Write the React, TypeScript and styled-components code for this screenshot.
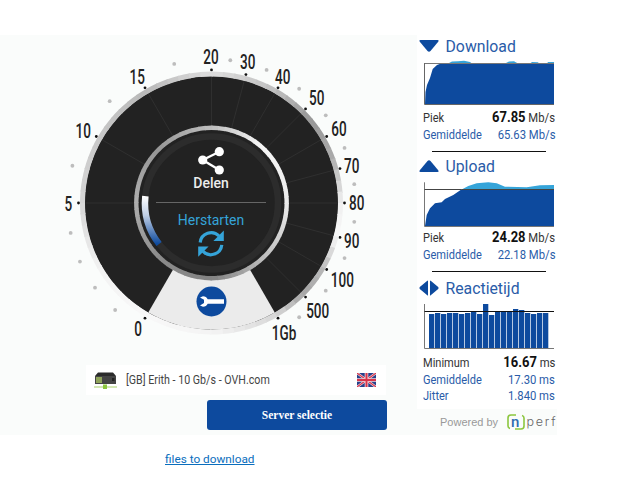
import React from "react";
import styled, { createGlobalStyle } from "styled-components";

const GlobalStyle = createGlobalStyle`
  html, body {
    margin: 0;
    padding: 0;
    background: #fff;
    font-family: Roboto, "Liberation Sans", sans-serif;
  }
`;

const BLUE = "#0d4a9e";
const SKY = "#35a4d9";
const CX = 211.5;
const CY = 203;

const Page = styled.div`
  width: 621px;
  height: 486px;
  padding-top: 35px;
  box-sizing: border-box;
`;

const Panel = styled.div`
  display: flex;
  width: 557px;
  height: 400px;
  background: #fafcfb;
`;

const LeftColumn = styled.div`
  width: 417px;
  display: flex;
  flex-direction: column;
`;

const GaugeSvg = styled.svg`
  display: block;
  width: 417px;
  height: 330px;
  flex: none;
`;

const ServerRow = styled.div`
  display: flex;
  align-items: center;
  width: 300px;
  height: 30px;
  margin-left: 86px;
  padding: 0 10px 0 8px;
  box-sizing: border-box;
  background: #fff;
  color: #444;
  font-size: 12px;
`;

const ServerName = styled.span`
  flex: 1;
  margin-left: 9px;
  transform: scaleX(0.89);
  transform-origin: left center;
  white-space: nowrap;
`;

const ServerButton = styled.button`
  display: block;
  width: 180px;
  height: 30px;
  margin: 5px 0 0 207px;
  border: 0;
  border-radius: 3px;
  background: ${BLUE};
  color: #fff;
  font-family: "Liberation Serif", serif;
  font-size: 11.5px;
  font-weight: 700;
`;

const RightColumn = styled.div`
  width: 140px;
  display: flex;
  flex-direction: column;
`;

const StatsCard = styled.div`
  background: #fff;
  height: 374px;
  padding: 1px 2px 0 2px;
  box-sizing: border-box;
`;

const Section = styled.section<{ $height: number }>`
  height: ${(p) => p.$height}px;
`;

const TitleRow = styled.div`
  display: flex;
  align-items: center;
  gap: 6.5px;
  height: 20px;
  color: #2a5ca8;
  font-size: 15.8px;
`;

const ChartSvg = styled.svg`
  display: block;
  width: 134px;
  margin: 4px 0 2px 1px;
  flex: none;
`;

const Stat = styled.div<{ $accent?: boolean }>`
  display: flex;
  justify-content: space-between;
  align-items: baseline;
  height: ${(p) => (p.$accent ? 16 : 18)}px;
  margin-top: ${(p) => (p.$accent ? 0.6 : 0)}px;
  padding-left: 4px;
  color: ${(p) => (p.$accent ? "#2a5ca8" : "#333")};
  font-size: 12px;
`;

const StatLabel = styled.span`
  display: inline-block;
  transform: scaleX(0.92);
  transform-origin: left center;
`;

const StatValue = styled.span`
  display: inline-block;
  transform: scaleX(0.94);
  transform-origin: right center;
  white-space: nowrap;
`;

const Strong = styled.b`
  color: #111;
  font-size: 13.8px;
  font-weight: 700;
  margin-right: 0;
`;

const Divider = styled.div`
  width: 114px;
  height: 1px;
  margin: 7px 0 0 13px;
  background: #111;
`;

const PoweredRow = styled.div`
  display: flex;
  align-items: center;
  height: 26px;
  padding-left: 23px;
  color: #999;
  font-family: "Liberation Sans", sans-serif;
  font-size: 11px;
  white-space: nowrap;
  overflow: hidden;
`;

const LogoSvg = styled.svg`
  flex: none;
  margin-left: 9px;
`;

const DownloadLink = styled.a`
  display: block;
  margin: 17px 0 0 165px;
  color: #0a6ebd;
  font-size: 11.8px;
  line-height: 14px;
  text-decoration: underline;
`;

const TickLabel = styled.text`
  font-family: Roboto, sans-serif;
  font-size: 20.5px;
  font-weight: 500;
  fill: #222;
  text-anchor: middle;
  dominant-baseline: central;
`;

const GaugeCaption = styled.text<{ $color: string; $weight: number }>`
  font-family: Roboto, sans-serif;
  font-size: 14px;
  font-weight: ${(p) => p.$weight};
  fill: ${(p) => p.$color};
  text-anchor: middle;
`;

const polar = (deg: number, r: number) => {
  const a = (deg * Math.PI) / 180;
  return [CX + r * Math.sin(a), CY - r * Math.cos(a)];
};

const labels: [string, number, number][] = [
  ["20", 211, 57.3],
  ["30", 247.7, 62.3],
  ["40", 282.7, 76.7],
  ["50", 316.7, 97.7],
  ["60", 339, 129],
  ["70", 351.7, 165.7],
  ["80", 356.7, 203.3],
  ["90", 351.7, 241],
  ["100", 342.3, 280],
  ["500", 317.7, 311],
  ["1Gb", 284, 333.3],
  ["0", 138, 328.7],
  ["5", 68.3, 204],
  ["10", 83.3, 130.7],
  ["15", 137.3, 76.7],
];

const majorAngles = [-150, -90, -60, -30, 0, 15, 30, 45, 60, 75, 90, 105, 120, 135, 150];
const gridAngles = [-90, -60, -30, 0, 15, 30, 45, 60, 75, 90, 105, 120, 135];
const dotAngles = [
  -138, -126, -114, -102, -75, -45, -15, 7.5, 22.5, 37.5, 52.5, 67.5, 82.5, 97.5, 112.5, 127.5, 142.5,
];

// grey level of the metal rim by angle, clockwise from the top
const rimStops: [number, number][] = [
  [0, 222],
  [30, 190],
  [50, 150],
  [70, 172],
  [90, 240],
  [105, 248],
  [120, 185],
  [135, 165],
  [150, 215],
  [180, 244],
  [210, 248],
  [240, 242],
  [270, 215],
  [300, 200],
  [330, 185],
  [360, 222],
];

const hubStops: [number, number][] = [
  [0, 190],
  [40, 245],
  [90, 235],
  [135, 190],
  [180, 130],
  [225, 140],
  [270, 175],
  [315, 150],
  [360, 190],
];

const greyAt = (stops: [number, number][], deg: number) => {
  for (let i = 1; i < stops.length; i++) {
    if (deg <= stops[i][0]) {
      const [a, ga] = stops[i - 1];
      const [b, gb] = stops[i];
      const g = Math.round(ga + ((gb - ga) * (deg - a)) / (b - a));
      return `rgb(${g},${g},${g})`;
    }
  }
  return "#ccc";
};

function MetalRing({ r, width, stops }: { r: number; width: number; stops: [number, number][] }) {
  const parts = [];
  for (let d = 0; d < 360; d += 5) {
    const [x1, y1] = polar(d, r);
    const [x2, y2] = polar(d + 5.6, r);
    parts.push(
      <path
        key={d}
        d={`M${x1} ${y1} A${r} ${r} 0 0 1 ${x2} ${y2}`}
        fill="none"
        stroke={greyAt(stops, d + 2.5)}
        strokeWidth={width}
      />,
    );
  }
  return <g>{parts}</g>;
}

function RefreshIcon() {
  const half = (
    <>
      <path d="M200.2 242.5A11 11 0 0 1 219 236" fill="none" stroke={SKY} strokeWidth={3.2} />
      <path d="M223.8 230.6V241H213.4Z" fill={SKY} />
    </>
  );
  return (
    <g>
      {half}
      <g transform="rotate(180 211 243.7)">{half}</g>
    </g>
  );
}

function Gauge() {
  const [ax, ay] = polar(-150, 126.5);
  const [bx, by] = polar(150, 126.5);
  const [p1x, p1y] = polar(-84, 66.5);
  const [p2x, p2y] = polar(-128, 66.5);
  return (
    <GaugeSvg viewBox="0 35 417 330">
      <defs>
        <linearGradient id="progress" x1="0" y1="0" x2="0" y2="1">
          <stop offset="0" stopColor="#ffffff" />
          <stop offset="0.4" stopColor="#c0cfe6" />
          <stop offset="1" stopColor={BLUE} />
        </linearGradient>
      </defs>

      {dotAngles.map((d) => {
        const [x, y] = polar(d, 144);
        return <circle key={d} cx={x} cy={y} r={1.9} fill="#bdbdbd" />;
      })}
      {majorAngles.map((d) => {
        const [x, y] = polar(d, 133);
        return <circle key={d} cx={x} cy={y} r={1.4} fill="#111" />;
      })}
      {labels.map(([text, x, y]) => (
        <TickLabel key={text} transform={`translate(${x} ${y}) scale(0.66 1)`}>
          {text}
        </TickLabel>
      ))}

      <circle cx={CX} cy={CY} r={127} fill="#222" />
      <path d={`M${CX} ${CY} L${ax} ${ay} A126.5 126.5 0 0 0 ${bx} ${by} Z`} fill="#ebebeb" />
      <MetalRing r={129} width={5} stops={rimStops} />
      {gridAngles.map((d) => {
        const [x1, y1] = polar(d, 78);
        const [x2, y2] = polar(d, 126);
        return <line key={d} x1={x1} y1={y1} x2={x2} y2={y2} stroke="#353535" strokeWidth={0.7} />;
      })}

      <circle cx={CX} cy={CY} r={74} fill="#222" />
      <MetalRing r={75.2} width={4.4} stops={hubStops} />
      <circle cx={CX} cy={CY} r={66.5} fill="none" stroke="#2c2c2c" strokeWidth={6.5} />
      <path
        d={`M${p1x} ${p1y} A66.5 66.5 0 0 0 ${p2x} ${p2y}`}
        fill="none"
        stroke="url(#progress)"
        strokeWidth={6.5}
      />
      <line x1={156} y1={202.5} x2={266} y2={202.5} stroke="#666" strokeWidth={1} />

      <g fill="#fff" stroke="#fff">
        <line x1={202.7} y1={160} x2={219.3} y2={151.7} strokeWidth={2.4} />
        <line x1={202.7} y1={160} x2={219.3} y2={170} strokeWidth={2.4} />
        <circle cx={202.7} cy={160} r={4.6} strokeWidth={0} />
        <circle cx={219.3} cy={151.7} r={4.6} strokeWidth={0} />
        <circle cx={219.3} cy={170} r={4.6} strokeWidth={0} />
      </g>
      <GaugeCaption x={211} y={188} $color="#ededed" $weight={500}>
        Delen
      </GaugeCaption>
      <GaugeCaption x={211} y={225} $color={SKY} $weight={400}>
        Herstarten
      </GaugeCaption>
      <RefreshIcon />

      <circle cx={211.5} cy={301.5} r={15} fill={BLUE} />
      <path
        d="M203 296.3a5.2 5.2 0 0 1 4.7 3H224V303.7H207.7a5.2 5.2 0 0 1-4.7 3L200 305.6l4-2.6v-3.2l-4-2.4z"
        fill="#fff"
      />
    </GaugeSvg>
  );
}

function DownloadChart() {
  return (
    <ChartSvg height={47} viewBox="0 0 134 47">
      <path
        d="M28 3.5 L32 1.5 L38 1.2 L44 0.8 L50 2 L52 3.5 Z M85 3.5 L89 1.5 L94 1.2 L98 3.5 Z M110 3.5 L112 2 L118 2.2 L119 3.5 Z M127 3.5 L128 2 H134 V3.5 Z"
        fill={SKY}
      />
      <path d="M5 44.5 L5.5 32 L7 25 L10 18 L12.7 9 L17 5 L21 3.5 H134 V44.5 Z" fill={BLUE} />
      <path d="M4.5 3.5 H134" stroke="#777" strokeWidth={1} />
      <path d="M4.5 3 V44.5 H134" fill="none" stroke="#666" strokeWidth={1} />
    </ChartSvg>
  );
}

function UploadChart() {
  return (
    <ChartSvg height={47} viewBox="0 0 134 47">
      <path
        d="M41.7 9.5 L48.3 6 L56.7 3.3 L68.3 2.3 L76.7 3.3 L85 6.7 L106.7 7.3 L120 5.3 L134 5 V9.5 Z"
        fill={SKY}
      />
      <path
        d="M5 46 L6.7 35 L10 28.3 L15 23.3 L21.7 22.3 L25 19 L33.3 15 L41.7 9.3 H134 V46 Z"
        fill={BLUE}
      />
      <path d="M4.5 2.3 V46.5 H134" fill="none" stroke="#777" strokeWidth={1} />
      <path d="M41.7 9.5 H134 M4.5 9.5 H41.7" stroke="#444" strokeWidth={1} />
    </ChartSvg>
  );
}

const latency = [117, 114, 117, 114, 114, 117, 114, 110, 117, 87, 120, 110, 110, 110, 102, 105, 114, 117, 114, 114];

function LatencyChart() {
  return (
    <ChartSvg height={50} viewBox="0 0 134 50">
      {latency.map((top, i) => {
        const y = top / 3 - 27;
        return <rect key={i} x={9 + i * 6} y={y} width={5.3} height={46 - y} fill={BLUE} />;
      })}
      <path d="M4.5 2 V46.5 H134" fill="none" stroke="#777" strokeWidth={1} />
      <path d="M4.5 9.5 H134" stroke="#111" strokeWidth={1} />
    </ChartSvg>
  );
}

function ArrowDown() {
  return (
    <svg width={20} height={12} viewBox="0 0 20 12">
      <path d="M1.5 0 H18.5 Q20.5 0 19 2 L11.5 11 Q10 12.5 8.5 11 L1 2 Q-.5 0 1.5 0 Z" fill={BLUE} />
    </svg>
  );
}

function ArrowUp() {
  return (
    <svg width={20} height={12} viewBox="0 0 20 12">
      <path d="M1.5 12 H18.5 Q20.5 12 19 10 L11.5 1 Q10 -.5 8.5 1 L1 10 Q-.5 12 1.5 12 Z" fill={BLUE} />
    </svg>
  );
}

function ArrowsBoth() {
  return (
    <svg width={20} height={16} viewBox="0 0 20 16">
      <path d="M9 1 V15 Q9 16 8 15 L.8 9 Q0 8 .8 7 L8 1 Q9 0 9 1 Z" fill={BLUE} />
      <path d="M11 1 V15 Q11 16 12 15 L19.2 9 Q20 8 19.2 7 L12 1 Q11 0 11 1 Z" fill={BLUE} />
    </svg>
  );
}

function ServerIcon() {
  return (
    <svg width={23} height={17} viewBox="0 0 23 17">
      <path d="M4 0.5 H19 L22 4 H1 Z" fill="#2b2b2b" />
      <rect x={1} y={4} width={21} height={8} fill="#444" />
      <rect x={2} y={5} width={6} height={6} fill="#8fa35a" />
      <rect x={18} y={6} width={2.5} height={3} fill="#222" />
      <rect x={0} y={14.5} width={23} height={1} fill="#a7cf6b" />
      <rect x={9} y={12.5} width={4} height={4.5} fill="#8cc63f" />
    </svg>
  );
}

function UkFlag() {
  return (
    <svg width={19} height={14} viewBox="0 0 19 14">
      <rect width={19} height={14} fill="#27408b" />
      <path d="M0 0 L19 14 M19 0 L0 14" stroke="#f2d6da" strokeWidth={2.4} />
      <path d="M0 0 L19 14 M19 0 L0 14" stroke="#d8344a" strokeWidth={1.1} />
      <path d="M9.5 0 V14 M0 7 H19" stroke="#f2d6da" strokeWidth={3.6} />
      <path d="M9.5 0 V14 M0 7 H19" stroke="#d8344a" strokeWidth={2} />
    </svg>
  );
}

function NperfLogo() {
  return (
    <LogoSvg width={51} height={16} viewBox="0 0 51 16">
      <path d="M9 1 H4 Q1 1 1 4 V12 Q1 14 3 14.5" fill="none" stroke="#8cc63f" strokeWidth={1.6} />
      <path d="M8 15 H14 Q17 15 17 12 V4 Q17 2 15 1.5" fill="none" stroke="#8cc63f" strokeWidth={1.6} />
      <text x={4} y={12.5} fontFamily="Roboto, sans-serif" fontSize={15} fontWeight={500} fill="#2f6db0">
        n
      </text>
      <text x={19.5} y={11.5} fontFamily="Inter, sans-serif" fontSize={12.5} fontWeight={300} letterSpacing={1.8} fill="#666">
        perf
      </text>
    </LogoSvg>
  );
}

export default function App() {
  return (
    <Page>
      <GlobalStyle />
      <Panel>
        <LeftColumn>
          <Gauge />
          <ServerRow>
            <ServerIcon />
            <ServerName>[GB] Erith - 10 Gb/s - OVH.com</ServerName>
            <UkFlag />
          </ServerRow>
          <ServerButton>Server selectie</ServerButton>
        </LeftColumn>
        <RightColumn>
          <StatsCard>
            <Section $height={120}>
              <TitleRow>
                <ArrowDown />
                Download
              </TitleRow>
              <DownloadChart />
              <Stat>
                <StatLabel>Piek</StatLabel>
                <StatValue>
                  <Strong>67.85</Strong> Mb/s
                </StatValue>
              </Stat>
              <Stat $accent>
                <StatLabel>Gemiddelde</StatLabel>
                <StatValue>65.63 Mb/s</StatValue>
              </Stat>
              <Divider />
            </Section>
            <Section $height={122}>
              <TitleRow>
                <ArrowUp />
                Upload
              </TitleRow>
              <UploadChart />
              <Stat>
                <StatLabel>Piek</StatLabel>
                <StatValue>
                  <Strong>24.28</Strong> Mb/s
                </StatValue>
              </Stat>
              <Stat $accent>
                <StatLabel>Gemiddelde</StatLabel>
                <StatValue>22.18 Mb/s</StatValue>
              </Stat>
              <Divider />
            </Section>
            <Section $height={130}>
              <TitleRow>
                <ArrowsBoth />
                Reactietijd
              </TitleRow>
              <LatencyChart />
              <Stat>
                <StatLabel>Minimum</StatLabel>
                <StatValue>
                  <Strong>16.67</Strong> ms
                </StatValue>
              </Stat>
              <Stat $accent>
                <StatLabel>Gemiddelde</StatLabel>
                <StatValue>17.30 ms</StatValue>
              </Stat>
              <Stat $accent>
                <StatLabel>Jitter</StatLabel>
                <StatValue>1.840 ms</StatValue>
              </Stat>
            </Section>
          </StatsCard>
          <PoweredRow>
            Powered by
            <NperfLogo />
          </PoweredRow>
        </RightColumn>
      </Panel>
      <DownloadLink href="#">files to download</DownloadLink>
    </Page>
  );
}
